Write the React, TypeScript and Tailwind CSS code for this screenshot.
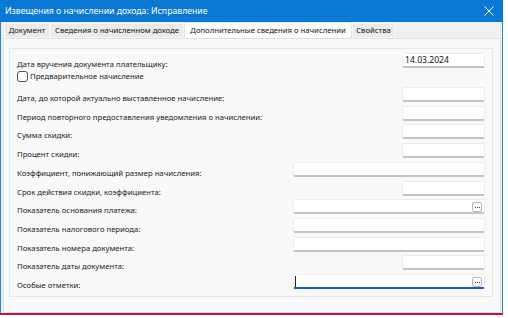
import React from "react";

type Row = { label: string; kind: "short" | "wide" | "wideBtn" | "focus"; value?: string; mt: string };

const rows: Row[] = [
  { label: "Дата, до которой актуально выставленное начисление:", kind: "short", mt: "mt-[6px]" },
  { label: "Период повторного предоставления уведомления о начислении:", kind: "short", mt: "mt-[5px]" },
  { label: "Сумма скидки:", kind: "short", mt: "mt-[4px]" },
  { label: "Процент скидки:", kind: "short", mt: "mt-[5px]" },
  { label: "Коэффициент, понижающий размер начисления:", kind: "wide", mt: "mt-[5px]" },
  { label: "Срок действия скидки, коэффициента:", kind: "short", mt: "mt-[5px]" },
  { label: "Показатель основания платежа:", kind: "wideBtn", mt: "mt-[4px]" },
  { label: "Показатель налогового периода:", kind: "wide", mt: "mt-[5px]" },
  { label: "Показатель номера документа:", kind: "wide", mt: "mt-[5px]" },
  { label: "Показатель даты документа:", kind: "short", mt: "mt-[4px]" },
  { label: "Особые отметки:", kind: "focus", mt: "mt-[5px]" },
];

function Dots() {
  return (
    <div className="absolute right-[2px] top-[2px] w-[10px] h-[10px] rounded-[2px] border border-[#b8b8b8] bg-white flex items-center justify-center gap-[1px]">
      <span className="w-[1px] h-[1px] bg-[#444]" />
      <span className="w-[1px] h-[1px] bg-[#444]" />
      <span className="w-[1px] h-[1px] bg-[#444]" />
    </div>
  );
}

function Input({ kind, value }: { kind: Row["kind"]; value?: string }) {
  const w = kind === "short" ? "w-[83px]" : "w-[192px]";
  const bottom = kind === "focus" ? "border-b-[2px] border-b-[#1565c0]" : "border-b-[2px] border-b-[#c4c4c4]";
  return (
    <div className={`relative ${w} h-[15px] bg-white border border-[#ececec] rounded-[2px] ${bottom} flex items-center pl-[2px] shrink-0`}>
      {value && <span className="text-[8.6px] leading-none text-[#111]">{value}</span>}
      {kind === "focus" && <span className="w-[1px] h-[11px] bg-[#222] ml-[-1px]" />}
      {(kind === "wideBtn" || kind === "focus") && <Dots />}
    </div>
  );
}

export default function App() {
  return (
    <div className="w-[508px] h-[318px] bg-white relative overflow-hidden" style={{ fontFamily: '"Noto Sans", "Open Sans", sans-serif' }}>
      <div className="w-[503px] h-[313px] flex flex-col border-l border-r border-[#1f86d8] bg-[#f0f0f0]">
        {/* title bar */}
        <div className="h-[22px] bg-[#0a78d5] flex items-center justify-between shrink-0 -mx-px">
          <span className="text-white text-[8.7px] pl-[5px] leading-none whitespace-nowrap">Извещения о начислении дохода: Исправление</span>
          <svg width="10" height="10" viewBox="0 0 10 10" className="mr-[9px]">
            <path d="M0.5 0.5 L9.5 9.5 M9.5 0.5 L0.5 9.5" stroke="white" strokeWidth="1" />
          </svg>
        </div>
        {/* tabs */}
        <div className="h-[15px] flex items-end pl-[3px] text-[7.7px] leading-none text-[#111] shrink-0 mt-[1px] whitespace-nowrap">
          <div className="h-[15px] w-[46px] bg-[#ebebeb] border border-[#f7f7f7] flex items-center justify-center">Документ</div>
          <div className="h-[15px] w-[134px] bg-[#ebebeb] border border-[#f7f7f7] flex items-center justify-center">Сведения о начисленном доходе</div>
          <div className="h-[16px] w-[168px] bg-white border border-[#e4e4e4] border-b-0 flex items-center justify-center">Дополнительные сведения о начислении</div>
          <div className="h-[15px] w-[43px] bg-[#ebebeb] border border-[#f7f7f7] flex items-center justify-center">Свойства</div>
        </div>
        {/* panel */}
        <div className="flex-1 ml-[2px] mr-[1px] bg-[#f9f9f9] border border-[#e2e2e2] pt-[9px] pl-[5px] pr-[7px]">
          <div className="w-[484px] h-[249px] border border-[#e6e6e6] bg-[#f9f9f9] flex flex-col pt-[5px] pl-[7px] pr-[7px] text-[7.7px] text-[#1a1a1a] leading-none whitespace-nowrap">
            <div className="flex justify-between items-end h-[14px]">
              <span className="translate-y-[1px]">Дата вручения документа плательщику:</span>
              <Input kind="short" value="14.03.2024" />
            </div>
            <div className="flex items-center h-[11px] mt-[3px]">
              <span className="w-[11px] h-[11px] rounded-[3px] border border-[#555] bg-white shrink-0" />
              <span className="ml-[2px]">Предварительное начисление</span>
            </div>
            {rows.map((r) => (
              <div key={r.label} className={`flex justify-between items-end h-[14px] ${r.mt}`}>
                <span className="translate-y-[1px]">{r.label}</span>
                <Input kind={r.kind} value={r.value} />
              </div>
            ))}
          </div>
        </div>
      </div>
      <div className="w-[503px] h-[2px] bg-[#b8193f]" />
    </div>
  );
}
